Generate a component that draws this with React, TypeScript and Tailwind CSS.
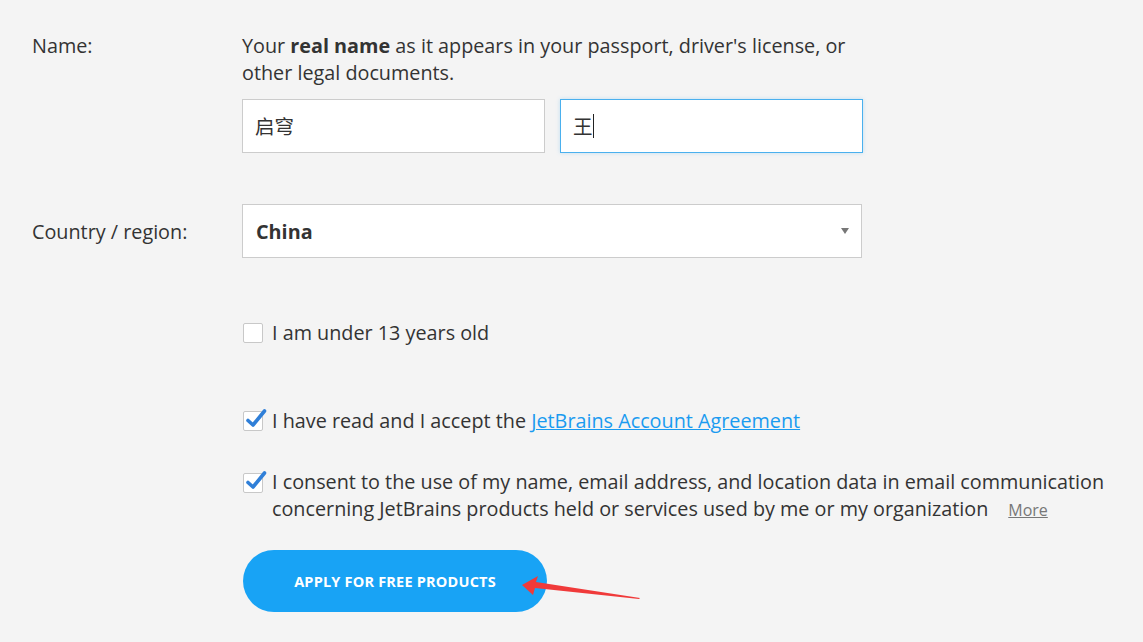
import React from "react";

const CheckMark = () => (
  <svg width="24" height="24" viewBox="0 0 24 24" className="absolute -top-[4px] left-0 overflow-visible">
    <path d="M4 12.5 L9 17 L20.5 3" fill="none" stroke="#2f7fd8" strokeWidth="3.6" strokeLinecap="round" strokeLinejoin="round" />
  </svg>
);

const Box = ({ checked }: { checked?: boolean }) => (
  <span className="relative inline-block w-[20px] h-[20px] shrink-0 border border-[#c8c8c8] bg-white rounded-[2px]">
    {checked && <CheckMark />}
  </span>
);

const App = () => {
  return (
    <div
      className="w-[1143px] h-[642px] bg-[#f4f4f4] text-[#333] text-[19.8px] leading-[27px] overflow-hidden relative"
      style={{ fontFamily: '"Open Sans", "Noto Sans CJK SC", sans-serif' }}
    >
      <div className="flex pt-[32px]">
        <div className="w-[242px] pl-[32px]">Name:</div>
        <div className="flex flex-col">
          <p className="w-[620px]">
            Your <b className="font-bold">real name</b> as it appears in your passport, driver's license, or other legal documents.
          </p>
          <div className="flex gap-[15px] mt-[13px]">
            <div className="w-[303px] h-[54px] bg-white border border-[#cccccc] flex items-center pl-[12px] text-[19.5px]">
              启穹
            </div>
            <div className="w-[303px] h-[54px] bg-white border border-[#4ab0ee] flex items-center pl-[12px] text-[19.5px] shadow-[0_0_4px_rgba(74,176,238,0.3)]">
              王<span className="w-px h-[24px] bg-[#222]" />
            </div>
          </div>
        </div>
      </div>

      <div className="flex items-center mt-[51px]">
        <div className="w-[242px] pl-[32px]">Country / region:</div>
        <div className="w-[620px] h-[54px] bg-white border border-[#cccccc] flex items-center justify-between pl-[13px] pr-[12px]">
          <span className="font-bold">China</span>
          <span className="w-0 h-0 border-l-[4px] border-r-[4px] border-t-[6px] border-l-transparent border-r-transparent border-t-[#777]" />
        </div>
      </div>

      <div className="pl-[243px]">
        <label className="flex items-center gap-[9px] mt-[61px]">
          <Box />
          <span>I am under 13 years old</span>
        </label>

        <label className="flex items-center gap-[9px] mt-[61px]">
          <Box checked />
          <span>
            I have read and I accept the{" "}
            <a className="text-[#1a9bf0] underline">JetBrains Account Agreement</a>
          </span>
        </label>

        <label className="flex items-start gap-[9px] mt-[34px]">
          <span className="mt-[4px]">
            <Box checked />
          </span>
          <span className="w-[850px]">
            I consent to the use of my name, email address, and location data in email communication concerning JetBrains products held or services used by me or my organization
            <a className="ml-[20px] text-[16px] text-[#777] underline">More</a>
          </span>
        </label>

        <button className="mt-[26px] w-[304px] h-[62px] rounded-full bg-[#18a3f5] text-white text-[14.5px] font-bold tracking-[0.2px]">
          APPLY FOR FREE PRODUCTS
        </button>
      </div>

      <svg className="absolute left-[518px] top-[575px]" width="125" height="30" viewBox="0 0 125 30">
        <path d="M4 10 L20 1 L18 7 L122 23 L121 24 L17 13 L15 20 Z" fill="#f03a3a" />
      </svg>
    </div>
  );
};

export default App;
